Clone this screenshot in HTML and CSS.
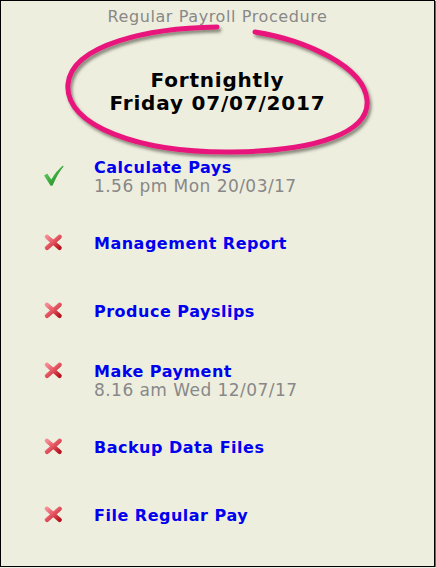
FILE: index.html
```html
<!DOCTYPE html>
<html lang="en">
<head>
<meta charset="utf-8">
<title>Regular Payroll Procedure</title>
<link rel="stylesheet" href="styles.css">
</head>
<body>
<svg class="defs" width="0" height="0" aria-hidden="true">
  <defs>
    <linearGradient id="tick-fill" x1="0" y1="0" x2="1" y2="1">
      <stop offset="0" stop-color="#7fdc7f"/>
      <stop offset="0.55" stop-color="#3aa83a"/>
      <stop offset="1" stop-color="#1f7a22"/>
    </linearGradient>
    <linearGradient id="cross-fill" x1="0" y1="0" x2="1" y2="1">
      <stop offset="0" stop-color="#f48a92"/>
      <stop offset="0.5" stop-color="#e2525e"/>
      <stop offset="1" stop-color="#b8141f"/>
    </linearGradient>
    <filter id="ring-shadow" x="-10%" y="-20%" width="120%" height="140%">
      <feDropShadow dx="2" dy="3" stdDeviation="1.8" flood-color="#3a3a30" flood-opacity="0.55"/>
    </filter>
    <symbol id="tick" viewBox="0 0 24 24" overflow="visible">
      <path d="M4 19.5 L7.2 17.6 L11.3 23.4 Q16 15 23 9.4 L23.6 10.4 Q17.5 17.5 12.6 29.6 L10.6 29.8 Z" fill="url(#tick-fill)"/>
    </symbol>
    <symbol id="cross" viewBox="0 0 24 24" overflow="visible">
      <g stroke="url(#cross-fill)" stroke-width="4.4" stroke-linecap="round">
        <path d="M7 4.8 L19.6 15.8"/>
        <path d="M19.6 4.8 L7 15.8"/>
      </g>
    </symbol>
  </defs>
</svg>

<div class="panel">
  <header class="head">
    <svg class="ring" viewBox="0 0 436 170" aria-hidden="true">
      <path d="M217 27 C150 28 72 44 68 84 C64 126 140 153 232 152 C318 151 370 132 367 100 C364 66 305 40 255 32"
            fill="none" stroke="#e8157c" stroke-width="5" stroke-linecap="round" filter="url(#ring-shadow)"/>
    </svg>
    <div class="procedure">Regular Payroll Procedure</div>
    <div class="period">
      <div>Fortnightly</div>
      <div>Friday 07/07/2017</div>
    </div>
  </header>

  <ul class="steps">
    <li class="step">
      <div class="step-body">
        <svg class="icon"><use href="#tick"/></svg>
        <div class="step-text">
          <a class="step-title" href="#">Calculate Pays</a>
          <div class="step-when">1.56 pm Mon 20/03/17</div>
        </div>
      </div>
    </li>
    <li class="step">
      <div class="step-body">
        <svg class="icon"><use href="#cross"/></svg>
        <div class="step-text">
          <a class="step-title" href="#">Management Report</a>
        </div>
      </div>
    </li>
    <li class="step">
      <div class="step-body">
        <svg class="icon"><use href="#cross"/></svg>
        <div class="step-text">
          <a class="step-title" href="#">Produce Payslips</a>
        </div>
      </div>
    </li>
    <li class="step">
      <div class="step-body">
        <svg class="icon"><use href="#cross"/></svg>
        <div class="step-text">
          <a class="step-title" href="#">Make Payment</a>
          <div class="step-when">8.16 am Wed 12/07/17</div>
        </div>
      </div>
    </li>
    <li class="step">
      <div class="step-body">
        <svg class="icon"><use href="#cross"/></svg>
        <div class="step-text">
          <a class="step-title" href="#">Backup Data Files</a>
        </div>
      </div>
    </li>
    <li class="step">
      <div class="step-body">
        <svg class="icon"><use href="#cross"/></svg>
        <div class="step-text">
          <a class="step-title" href="#">File Regular Pay</a>
        </div>
      </div>
    </li>
  </ul>
</div>
</body>
</html>
```

FILE: styles.css
```css
html, body {
  margin: 0;
  background: #eeeedf;
}

.defs {
  position: absolute;
  width: 0;
  height: 0;
}

.panel {
  width: 433px;
  height: 565px;
  border: 1px solid #000;
  box-shadow: 1px 1px 0 #666;
  background: #eeeedf;
  font-family: "DejaVu Sans", Verdana, sans-serif;
}

/* header: procedure name and the circled pay period */
.head {
  position: relative;
  height: 142px;
  text-align: center;
}

.ring {
  position: absolute;
  left: -1px;
  top: -1px;
  width: 436px;
  height: 170px;
  overflow: visible;
  pointer-events: none;
}

.procedure {
  padding-top: 7px;
  font-size: 16px;
  line-height: 18px;
  letter-spacing: 0.6px;
  color: #888;
}

.period {
  margin-top: 43px;
  font-size: 20px;
  line-height: 23px;
  letter-spacing: 0.8px;
  font-weight: bold;
  color: #000;
}

/* procedure steps */
.steps {
  list-style: none;
  margin: 0;
  padding: 0 0 0 39px;
}

.step {
  height: 68px;
  display: flex;
  align-items: center;
}

.step-body {
  display: flex;
  align-items: flex-start;
}

.icon {
  flex: none;
  width: 24px;
  height: 24px;
  margin-top: -3px;
  margin-right: 30px;
  overflow: visible;
}

.step-title {
  display: block;
  font-size: 16px;
  line-height: 18px;
  letter-spacing: 0.5px;
  font-weight: bold;
  color: #0000ee;
  text-decoration: none;
}

.step-when {
  font-size: 17px;
  line-height: 18px;
  letter-spacing: 0.45px;
  color: #888;
}
```
